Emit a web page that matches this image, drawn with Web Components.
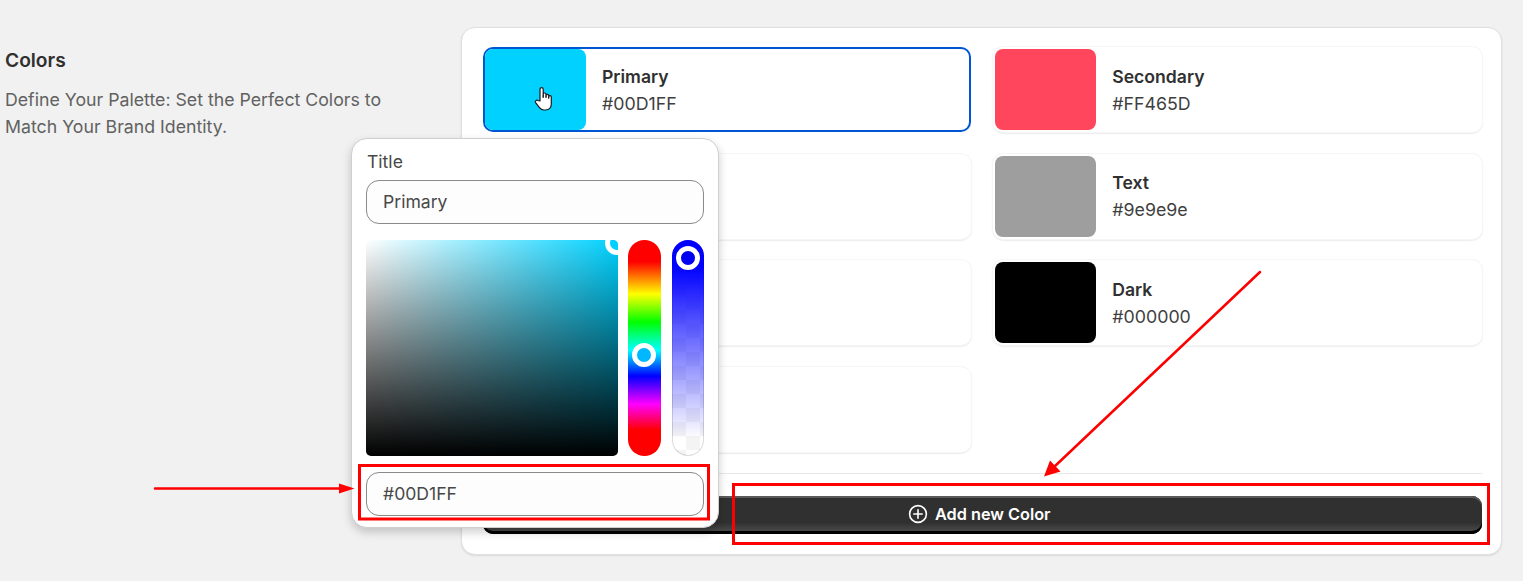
<!DOCTYPE html>
<html lang="en">
<head>
<meta charset="utf-8">
<title>Colors</title>
<style>
html,body{margin:0;padding:0;background:#f1f1f1;}
body{width:1523px;height:581px;overflow:hidden;font-family:Inter,"Liberation Sans",sans-serif;color:#303030;}
</style>
</head>
<body>
<settings-page>
  <section-intro slot="intro" heading="Colors">Define Your Palette: Set the Perfect Colors to Match Your Brand Identity.</section-intro>
  <palette-card slot="card">
    <color-card name="Primary" hex="#00D1FF" color="#00D1FF" selected></color-card>
    <color-card name="Secondary" hex="#FF465D" color="#FF465D"></color-card>
    <color-card></color-card>
    <color-card name="Text" hex="#9e9e9e" color="#9e9e9e"></color-card>
    <color-card></color-card>
    <color-card name="Dark" hex="#000000" color="#000000"></color-card>
    <color-card></color-card>
    <primary-button slot="footer">Add new Color</primary-button>
  </palette-card>
  <color-popover slot="overlay"></color-popover>
  <annotation-layer slot="overlay"></annotation-layer>
</settings-page>
<script>
function def(name, css, html){
  customElements.define(name, class extends HTMLElement{
    connectedCallback(){
      if(this.shadowRoot) return;
      const r=this.attachShadow({mode:'open'});
      r.innerHTML='<style>'+css+'</style>'+(typeof html==='function'?html(this):html);
    }
  });
}
def('settings-page',`
  :host{display:block;position:relative;width:1523px;height:581px;box-sizing:border-box;padding:27px 21px 0 5px;}
  .row{display:flex;align-items:flex-start;}
  .l{width:456px;flex:none;}
  .r{flex:1;min-width:0;}
`,`<div class="row"><div class="l"><slot name="intro"></slot></div><div class="r"><slot name="card"></slot></div></div><slot name="overlay"></slot>`);

def('section-intro',`
  :host{display:block;padding-top:20px;width:400px;}
  h2{margin:0 0 12px;font:600 19.200px/27px Inter,sans-serif;color:#303030;}
  p{margin:0;font:400 17.730px/27px Inter,sans-serif;color:#616161;}
`,h=>`<h2>${h.getAttribute('heading')}</h2><p><slot></slot></p>`);

def('palette-card',`
  :host{display:block;box-sizing:border-box;height:528px;background:#fff;border:1px solid #e0e0e0;border-radius:14px;padding:19px 19.500px 0 21px;box-shadow:0 1px 2px rgba(0,0,0,.1);}
  .grid{display:grid;grid-template-columns:1fr 1fr;column-gap:22px;row-gap:21.670px;height:426px;align-content:start;}
  hr{margin:0;border:0;border-top:1px solid #e8e8e8;}
  .f{padding-top:22px;}
`,`<div class="grid"><slot></slot></div><hr><div class="f"><slot name="footer"></slot></div>`);

def('color-card',`
  :host{display:block;box-sizing:border-box;height:85px;background:#fff;border-radius:10px;box-shadow:0 0 0 1px #f6f6f6,0 1px 2px rgba(0,0,0,.24);padding:2px;}
  :host([selected]){box-shadow:inset 0 0 0 2px #0055d4;}
  .in{display:flex;align-items:center;height:100%;gap:16px;}
  .sw{width:101px;height:81px;flex:none;border-radius:8px;display:flex;align-items:center;justify-content:center;}
  .t{display:flex;flex-direction:column;}
  b{font:600 17.600px/27px Inter,sans-serif;color:#303030;}
  span{font:400 17.800px/27px Inter,sans-serif;color:#3f3f3f;}
  svg{display:block;}
`,h=>{
  const n=h.getAttribute('name'),x=h.getAttribute('hex'),c=h.getAttribute('color');
  if(!n) return '<div class="in"></div>';
  const hand=h.hasAttribute('selected')?`<svg width="20" height="26" viewBox="0 0 20 26" style="margin:18px 0 0 17px"><path d="M6 15V3.200a1.600 1.600 0 0 1 3.200 0V11l0-2.600a1.400 1.400 0 0 1 2.800 0V11l0-1.600a1.400 1.400 0 0 1 2.700 0V12l0-1a1.300 1.300 0 0 1 2.600 0v7c0 3.600-2.400 6-5.800 6H10c-2.200 0-3.600-1-4.700-2.600L1.600 16.600a1.600 1.600 0 0 1 2.300-2.100z" fill="#fff" stroke="#1a1a1a" stroke-width="1.200" stroke-linejoin="round"/><path d="M9.200 8.500v3.500M12 9.500v2.500M14.700 10.500v2" stroke="#1a1a1a" stroke-width=".9"/></svg>`:'';
  return `<div class="in"><div class="sw" style="background:${c}">${hand}</div><div class="t"><b>${n}</b><span>${x}</span></div></div>`;
});

def('primary-button',`
  :host{display:block;}
  button{display:flex;align-items:center;justify-content:center;gap:7px;width:100%;height:38px;border:0;border-radius:10px;color:#fff;font:600 16.300px/20px Inter,sans-serif;
    background:linear-gradient(#303030 0 70%,#474747 90%,#303030);
    box-shadow:inset 0 -3px 0 #000,inset 0 2px 0 #5a5a5a,inset 0 0 0 1px #303030;padding:0 6px 3px 0;}
  svg{display:block;}
`,`<button><svg width="20" height="20" viewBox="0 0 20 20" fill="none" stroke="#fff" stroke-width="1.600" stroke-linecap="round"><circle cx="10" cy="10" r="8.400"/><path d="M10 5.800v8.400M5.800 10h8.400"/></svg><slot></slot></button>`);

def('color-popover',`
  :host{position:absolute;left:351px;top:138px;width:368px;height:390px;box-sizing:border-box;background:#fff;border:1px solid #cfcfcf;border-radius:16px;box-shadow:0 4px 10px rgba(0,0,0,.2);padding:11px 14px 0;display:grid;grid-template-columns:338px;grid-template-rows:24px 50px 232px 60px;}
  label{font:400 17.600px/24px Inter,sans-serif;color:#484848;padding-left:1px;}
  .g6{margin-top:6px;}
  .g16{margin-top:16px;}
  .pick{display:flex;height:216px;}
  .sv{position:relative;width:252px;flex:none;border-radius:5px;overflow:hidden;background:linear-gradient(to top,#000,transparent),linear-gradient(to right,#fff,#00D1FF);}
  .hue{position:relative;width:33px;flex:none;margin-left:10px;border-radius:17px;background:linear-gradient(#f00 0 10%,#ff0 25%,#0f0 38%,#0ff 51%,#00f 63%,#f0f 76%,#f00 88%,#f00);}
  .alpha{position:relative;width:32px;flex:none;margin-left:11px;border-radius:16px;overflow:hidden;background:conic-gradient(#f4f4f4 25%,#fff 0 50%,#f4f4f4 0 75%,#fff 0) 0 0/28px 28px;box-shadow:inset 0 0 0 1px rgba(0,0,0,.14);}
  .alpha::before{content:"";position:absolute;inset:0;background:linear-gradient(#00f 0 12%,rgba(0,0,255,0) 92%);}
  i{position:absolute;box-sizing:border-box;border:5px solid #fff;border-radius:50%;display:block;width:24px;height:24px;}
  .a{left:239px;top:-9px;background:#00D1FF;}
  .b{left:4px;top:103px;background:#00b8ff;}
  .c{left:4px;top:6px;background:#0000f0;}
`,`<label>Title</label><text-field class="g6">Primary</text-field>
<div class="pick g16"><div class="sv"><i class="a"></i></div><div class="hue"><i class="b"></i></div><div class="alpha"><i class="c"></i></div></div>
<text-field class="g16">#00D1FF</text-field>`);

def('text-field',`
  :host{display:flex;align-items:center;box-sizing:border-box;height:44px;padding:0 16px;border:1px solid #8a8a8a;border-radius:13px;background:#fdfdfd;font:400 17.600px/24px Inter,sans-serif;color:#484848;}
`,`<slot></slot>`);

def('annotation-layer',`
  :host{position:absolute;inset:0;pointer-events:none;display:block;}
  svg{position:absolute;left:0;top:0;}
`,`<svg width="1523" height="581" viewBox="0 0 1523 581" fill="none">
  <rect x="359.500" y="465.500" width="349" height="53.500" stroke="#f00" stroke-width="3"/>
  <rect x="733.500" y="484.500" width="755" height="59" stroke="#f00" stroke-width="3"/>
  <path d="M155 488.500H342" stroke="#f00" stroke-width="2.500" stroke-linecap="round"/>
  <path d="M354.500 488.500L339 483.500V493.500Z" fill="#f00"/>
  <path d="M1260 272L1054 467" stroke="#f00" stroke-width="2.500" stroke-linecap="round"/>
  <path d="M1044 476.500L1050 460.500L1060.500 471.500Z" fill="#f00"/>
</svg>`);
</script>
</body>
</html>
